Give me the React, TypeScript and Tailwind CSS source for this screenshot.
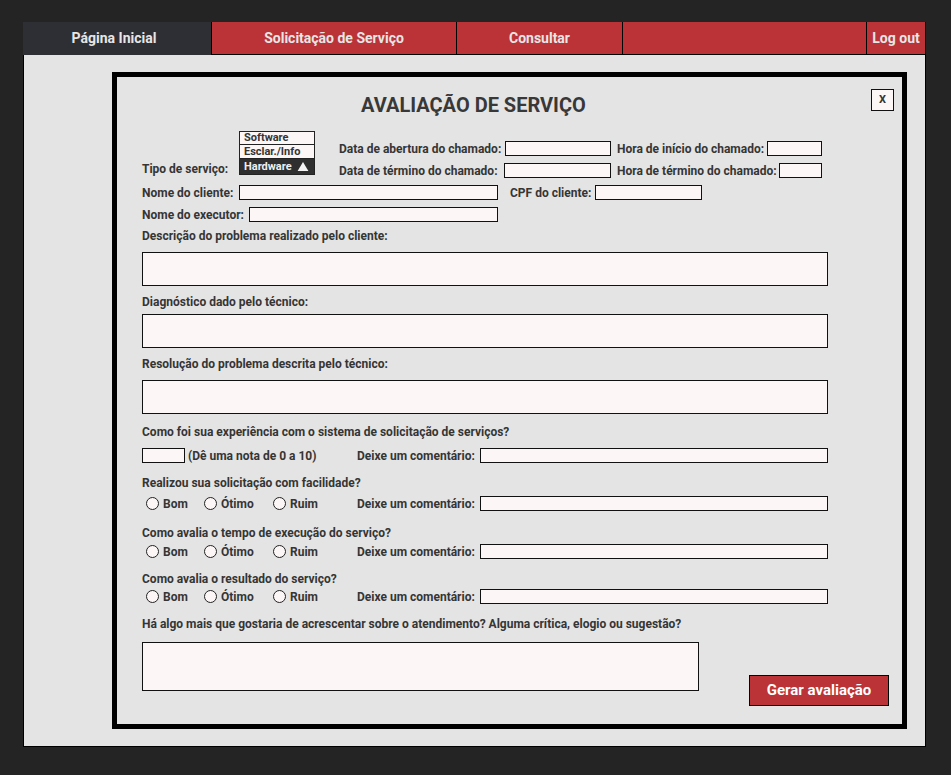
import React from 'react';

const box = 'border border-[#111] bg-[#fcf6f6]';

type RadioProps = { label: string; className?: string };

const Radio = ({ label, className = '' }: RadioProps) => (
  <div className={`flex items-center ${className}`}>
    <span className="h-[13px] w-[13px] shrink-0 rounded-full border border-[#222] bg-[#fcf6f6]" />
    <span className="ml-[4px]">{label}</span>
  </div>
);

const Comment = () => (
  <>
    <span className="w-[123px] shrink-0">Deixe um comentário:</span>
    <div className={`h-[15px] w-[348px] ${box}`} />
  </>
);

const RatingRow = ({ mt }: { mt: string }) => (
  <div className={`flex h-[15px] items-center ${mt}`}>
    <div className="flex w-[215px] shrink-0 items-center pl-[4px]">
      <Radio label="Bom" className="w-[58px]" />
      <Radio label="Ótimo" className="w-[69px]" />
      <Radio label="Ruim" />
    </div>
    <Comment />
  </div>
);

const Label = ({ children, mt }: { children: React.ReactNode; mt: string }) => (
  <p className={`h-[14px] leading-[14px] ${mt}`}>{children}</p>
);

const Nav = () => (
  <nav className="flex h-[33px] text-[14px] font-bold text-[#e6e6e6]">
    <a className="flex w-[188px] items-center justify-center bg-[#2e2f35] pr-[6px]">Página Inicial</a>
    <a className="flex w-[245px] items-center justify-center border-b border-l border-black bg-[#bb3237]">
      Solicitação de Serviço
    </a>
    <a className="flex w-[166px] items-center justify-center border-b border-l border-black bg-[#bb3237]">
      Consultar
    </a>
    <div className="w-[244px] border-b border-l border-black bg-[#bb3237]" />
    <a className="flex w-[60px] items-center justify-center border-b border-l border-r border-black bg-[#bb3237]">
      Log out
    </a>
  </nav>
);

export default function App() {
  return (
    <div
      className="min-h-[775px] bg-[#242424] pl-[23px] pt-[22px]"
      style={{ fontFamily: 'Roboto, "Liberation Sans", sans-serif' }}
    >
      <div className="w-[903px]">
        <Nav />
        <div className="border border-t-0 border-black bg-[#e4e4e4] pb-[17px] pl-[88px] pt-[17px]">
          <div className="w-[795px] border-[5px] border-black bg-[#e4e4e4] pb-[18px] pl-[25px] text-[12px] font-bold text-[#353535]">
            {/* title */}
            <div className="flex h-[36px] items-start pr-[8px] pt-[12px]">
              <h1 className="ml-[219px] mt-[4px] text-[20px] leading-[24px] font-bold text-[#383838]">
                AVALIAÇÃO DE SERVIÇO
              </h1>
              <button className={`ml-auto flex h-[22px] w-[23px] items-center justify-center text-[11px] font-bold ${box}`}>
                X
              </button>
            </div>

            {/* dados do chamado */}
            <div className="mt-[18px] flex items-start">
              <div className="flex h-[44px] items-end">
                <span className="mb-[-1px] w-[97px] leading-[14px]">Tipo de serviço:</span>
                <div className="w-[76px] border border-[#222] text-[11px] leading-[12px]">
                  <div className="h-[13px] border-b border-[#222] bg-[#fcf6f6] pl-[4px]">Software</div>
                  <div className="h-[14px] border-b border-[#222] bg-[#fcf6f6] pl-[4px] pt-[1px]">Esclar./Info</div>
                  <div className="flex h-[15px] items-center bg-[#2f2f2f] pl-[4px] text-[#f0f0f0]">
                    Hardware
                    <svg viewBox="0 0 12 10" className="ml-[5px] h-[9px] w-[12px]">
                      <path d="M6 0 L12 10 L0 10 Z" fill="#f4f4f4" />
                    </svg>
                  </div>
                </div>
              </div>
              <div className="ml-[24px] flex flex-col gap-[7px] pt-[10px]">
                <div className="flex h-[15px] items-center">
                  <span className="w-[166px]">Data de abertura do chamado:</span>
                  <div className={`h-[15px] w-[106px] ${box}`} />
                </div>
                <div className="flex h-[15px] items-center">
                  <span className="w-[165px]">Data de término do chamado:</span>
                  <div className={`h-[15px] w-[107px] ${box}`} />
                </div>
              </div>
              <div className="ml-[6px] flex flex-col gap-[7px] pt-[10px]">
                <div className="flex h-[15px] items-center">
                  <span className="w-[150px]">Hora de início do chamado:</span>
                  <div className={`h-[15px] w-[55px] ${box}`} />
                </div>
                <div className="flex h-[15px] items-center">
                  <span className="w-[162px]">Hora de término do chamado:</span>
                  <div className={`h-[15px] w-[43px] ${box}`} />
                </div>
              </div>
            </div>

            <div className="mt-[7px] flex h-[15px] items-center">
              <span className="w-[97px]">Nome do cliente:</span>
              <div className={`h-[15px] w-[259px] ${box}`} />
              <span className="ml-[12px] w-[85px]">CPF do cliente:</span>
              <div className={`h-[15px] w-[107px] ${box}`} />
            </div>
            <div className="mt-[7px] flex h-[15px] items-center">
              <span className="w-[107px]">Nome do executor:</span>
              <div className={`h-[15px] w-[249px] ${box}`} />
            </div>

            {/* descrições */}
            <Label mt="mt-[7px]">Descrição do problema realizado pelo cliente:</Label>
            <div className={`mt-[9px] h-[34px] w-[686px] ${box}`} />
            <Label mt="mt-[9px]">Diagnóstico dado pelo técnico:</Label>
            <div className={`mt-[5px] h-[34px] w-[686px] ${box}`} />
            <Label mt="mt-[9px]">Resolução do problema descrita pelo técnico:</Label>
            <div className={`mt-[9px] h-[34px] w-[686px] ${box}`} />

            {/* avaliação */}
            <Label mt="mt-[11px]">Como foi sua experiência com o sistema de solicitação de serviços?</Label>
            <div className="mt-[9px] flex h-[15px] items-center">
              <div className="flex w-[215px] shrink-0 items-center">
                <div className={`h-[15px] w-[43px] ${box}`} />
                <span className="ml-[3px]">(Dê uma nota de 0 a 10)</span>
              </div>
              <Comment />
            </div>

            <Label mt="mt-[13px]">Realizou sua solicitação com facilidade?</Label>
            <RatingRow mt="mt-[6px]" />
            <Label mt="mt-[15px]">Como avalia o tempo de execução do serviço?</Label>
            <RatingRow mt="mt-[4px]" />
            <Label mt="mt-[13px]">Como avalia o resultado do serviço?</Label>
            <RatingRow mt="mt-[3px]" />

            <Label mt="mt-[13px]">
              Há algo mais que gostaria de acrescentar sobre o atendimento? Alguma crítica, elogio ou sugestão?
            </Label>
            <div className="mt-[11px] flex items-start">
              <div className={`h-[49px] w-[557px] ${box}`} />
              <button className="ml-[50px] mt-[33px] flex h-[31px] w-[140px] items-center justify-center border border-black bg-[#bb3237] text-[15px] font-bold text-white">
                Gerar avaliação
              </button>
            </div>
          </div>
        </div>
      </div>
    </div>
  );
}
